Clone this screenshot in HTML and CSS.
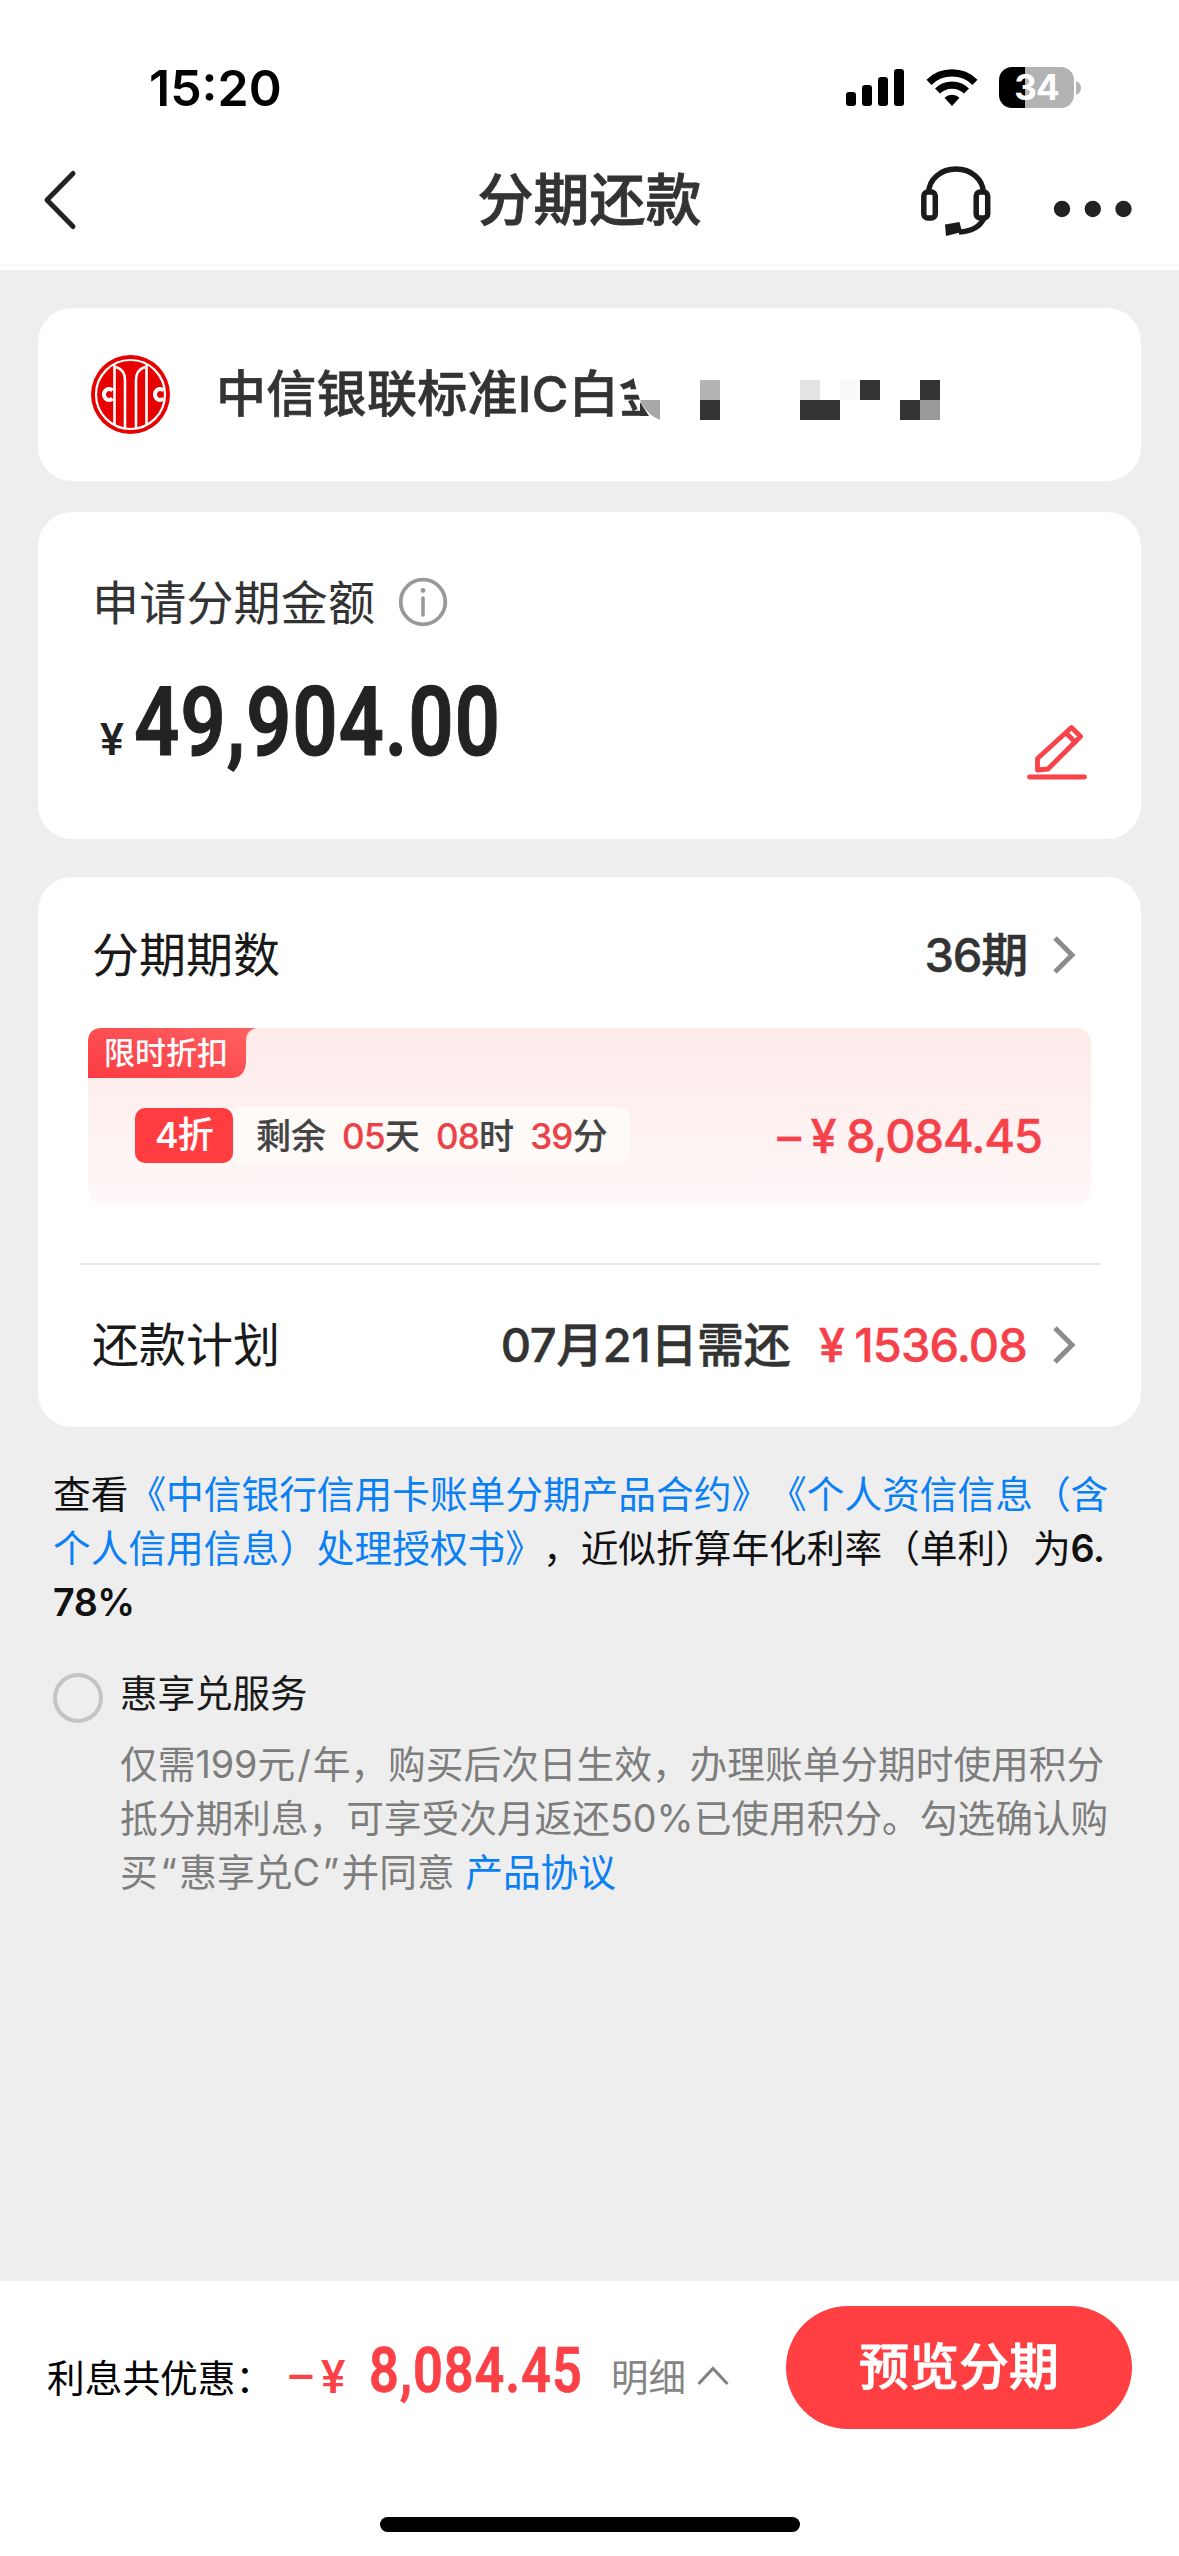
FILE: index.html
```html
<!DOCTYPE html>
<html lang="zh-CN">
<head>
<meta charset="utf-8">
<title>分期还款</title>
<link rel="stylesheet" href="styles.css">
</head>
<body>
<header class="top">
  <div class="status">
    <span class="clock">15:20</span>
    <div class="status-icons">
      <svg class="signal" width="58" height="38" viewBox="0 0 58 38"><rect x="0" y="23" width="10" height="14" rx="3"/><rect x="16" y="16" width="10" height="21" rx="3"/><rect x="32" y="8" width="10" height="29" rx="3"/><rect x="48" y="0" width="10" height="37" rx="3"/></svg>
      <svg class="wifi" width="52" height="38" viewBox="0 0 52 38"><g fill="none" stroke="#000" stroke-width="7.2"><path d="M3 13.3A33 33 0 0 1 49 13.3"/><path d="M11.5 22A21 21 0 0 1 40.500 22"/></g><path d="M18.500 28.700A11 11 0 0 1 33.500 28.700L26 37z"/></svg>
      <div class="battery"><span>34</span></div>
      <svg class="nub" width="5" height="14" viewBox="0 0 5 14"><path d="M0 0Q5 2 5 7T0 14z" fill="#b3b3b3"/></svg>
    </div>
  </div>
  <nav class="nav">
    <svg class="back" width="36" height="62" viewBox="0 0 36 62"><path d="M32 4.500L6 31L32 57.500" fill="none" stroke="#222" stroke-width="5" stroke-linecap="round" stroke-linejoin="round"/></svg>
    <h1>分期还款</h1>
    <div class="nav-actions">
      <svg width="70" height="70" viewBox="0 0 70 70" fill="none" stroke="#1a1a1a" stroke-width="5.500"><path d="M7.500 27C8 13 20 3 35 3S62 13 62.500 27"/><rect x="2.800" y="26" width="11.500" height="26" rx="4"/><rect x="55.200" y="26" width="11.500" height="26" rx="4"/><path d="M63 52C59 61 50 65.500 38 66"/><path d="M24 58.500L38.500 56L41 66L25 70z" fill="#1a1a1a" stroke="none"/></svg>
      <svg class="more" width="80" height="20" viewBox="0 0 80 20" fill="#222"><circle cx="9" cy="10" r="8.200"/><circle cx="39.800" cy="10" r="8.200"/><circle cx="70.500" cy="10" r="8.200"/></svg>
    </div>
  </nav>
</header>
<main class="content">
  <section class="card bank">
    <svg class="logo" width="79" height="79" viewBox="0 0 79 79"><circle cx="39.500" cy="39.500" r="39.500" fill="#e60000"/><g fill="none" stroke="#fff"><circle cx="39.500" cy="39.500" r="34.500" stroke-width="2.200"/><path d="M23.500 10V70M55.500 10V70" stroke-width="2.600"/><path d="M25 12Q34 15 34 25V73M54 12Q45 15 45 25V73" stroke-width="2.600"/><path d="M21.500 35.500A5 5.500 0 1 0 21.500 43.500M72.500 35.500A5 5.500 0 1 0 72.500 43.500" stroke-width="4.200"/></g></svg>
    <span class="bank-name">中信银联标准IC白金</span>
    <svg class="mask" width="340" height="70" viewBox="0 0 340 70"><path d="M34 0H340V70H62L50 58L43 48L40 40L36 28L34 20z" fill="#fff"/><path d="M20 70V58H50L60 60V70z" fill="#fff"/><path d="M40 40H60V60Q48 55 42 44z" fill="#a8a8a8"/><path d="M40 42L49 56H40z" fill="#333"/><rect x="100" y="20" width="20" height="20" fill="#b4b4b4"/><rect x="100" y="40" width="20" height="20" fill="#333"/><rect x="200" y="20" width="20" height="20" fill="#e4e4e4"/><rect x="200" y="40" width="40" height="20" fill="#333"/><rect x="240" y="20" width="20" height="20" fill="#fafafa"/><rect x="260" y="20" width="20" height="20" fill="#333"/><rect x="320" y="20" width="20" height="20" fill="#333"/><rect x="300" y="40" width="20" height="20" fill="#333"/><rect x="320" y="40" width="20" height="20" fill="#999"/></svg>
  </section>
  <section class="card amount-card">
    <div class="amount-label"><span>申请分期金额</span>
      <svg width="50" height="50" viewBox="0 0 50 50"><circle cx="25" cy="25" r="22.300" fill="none" stroke="#999" stroke-width="3.800"/><path d="M25 21V38" stroke="#999" stroke-width="3.600" stroke-linecap="round"/><circle cx="25" cy="13.500" r="2.400" fill="#999"/></svg>
    </div>
    <div class="amount-row">
      <div class="amount"><span class="yen">¥</span><span class="din">49,904.00</span></div>
      <svg class="edit" width="60" height="56" viewBox="0 0 60 56" fill="none" stroke="#f9424a" stroke-width="4.800" stroke-linecap="round" stroke-linejoin="round"><path d="M10.500 34.500L44.500 3.500L53.500 12.500L21 45L10.500 46z"/><path d="M39 9L48 18"/><path d="M2.500 53H57.500"/></svg>
    </div>
  </section>
  <section class="card plan">
    <div class="row">
      <span class="row-label">分期期数</span>
      <span class="row-value">36期</span>
      <svg class="arrow" width="24" height="40" viewBox="0 0 24 40"><path d="M3 3L20 20L3 37" fill="none" stroke="#8c8c8c" stroke-width="5"/></svg>
    </div>
    <div class="promo">
      <div class="promo-tag"><svg width="168" height="50" viewBox="0 0 168 50"><defs><linearGradient id="tag" x1="0" y1="1" x2="1" y2="0"><stop offset="0" stop-color="#fb3b42"/><stop offset="1" stop-color="#ff6162"/></linearGradient></defs><path d="M0 50V14Q0 0 14 0H168Q158 2 158 14V34Q157 50 143 50z" fill="url(#tag)"/></svg><span>限时折扣</span></div>
      <div class="promo-row">
        <span class="badge">4折</span>
        <span class="countdown"><span class="left">剩余</span><span><b>05</b>天</span><span><b>08</b>时</span><span><b>39</b>分</span></span>
        <span class="saving"><i>–</i><span class="yuan">¥</span><span>8,084.45</span></span>
      </div>
    </div>
    <div class="row repay">
      <span class="row-label">还款计划</span>
      <span class="row-value">07月21日需还</span>
      <span class="due"><span class="yuan">¥</span><span>1536.08</span></span>
      <svg class="arrow" width="24" height="40" viewBox="0 0 24 40"><path d="M3 3L20 20L3 37" fill="none" stroke="#8c8c8c" stroke-width="5"/></svg>
    </div>
  </section>
  <p class="terms">查看<a>《中信银行信用卡账单分期产品合约》《个人资信信息（含<br>个人信用信息）处理授权书》</a>，近似折算年化利率（单利）为<b>6.<br>78%</b></p>
  <section class="service">
    <span class="radio"></span>
    <div>
      <h2>惠享兑服务</h2>
      <p>仅需199元<span class="slash">/</span>年，购买后次日生效，办理账单分期时使用积分<br>抵分期利息，可享受次月返还50%已使用积分。勾选确认购<br>买<span class="quote">“</span>惠享兑C<span class="quote">”</span>并同意 <a>产品协议</a></p>
    </div>
  </section>
</main>
<footer class="bottom">
  <div class="pay-bar">
    <span class="sum-label">利息共优惠：</span>
    <span class="sum-sign">–</span><span class="sum-yen">¥</span>
    <span class="sum din">8,084.45</span>
    <span class="detail">明细</span>
    <svg class="caret" width="32" height="20" viewBox="0 0 32 20"><path d="M1.500 18L16 2.500L30.500 18" fill="none" stroke="#808080" stroke-width="3"/></svg>
    <button class="preview">预览分期</button>
  </div>
  <div class="home"></div>
</footer>
</body>
</html>
```
FILE: styles.css
```css
* { box-sizing: border-box; margin: 0; padding: 0; }
body {
  width: 1179px;
  height: 2556px;
  display: flex;
  flex-direction: column;
  background: #eee;
  color: #1a1a1a;
  font-family: Inter, "Noto Sans CJK SC", sans-serif;
  text-spacing-trim: space-all;
  white-space: nowrap;
  overflow: hidden;
}
svg { display: block; flex: none; }
a { color: #0a80f5; }

.top { height: 270px; background: #fff; flex: none; }
.status { height: 136px; padding: 0 98px 0 149px; display: flex; justify-content: space-between; }
.clock { margin-top: 58px; font-size: 50px; line-height: 60px; font-weight: 600; color: #000; }
.status-icons { display: flex; align-items: flex-start; padding-top: 67px; }
.signal { margin-top: 2px; }
.wifi { margin: 2px 21px 0 22px; }
.battery {
  width: 75px; height: 41px; border-radius: 13px;
  background: linear-gradient(90deg, #000 26px, #b3b3b3 26px);
  color: #fff; font-size: 35px; font-weight: 700; line-height: 41px; text-align: center;
  letter-spacing: -1px;
}
.nub { margin: 14px 0 0 2px; }
.nav { height: 130px; padding: 0 46px 0 41px; display: flex; align-items: center; justify-content: space-between; border-bottom: 2px solid #fafafa; }
.back { margin-right: 125px; }
.nav h1 { font-size: 56px; line-height: 64px; font-weight: 500; color: #333; margin-left: 56px; margin-bottom: 1px; -webkit-text-stroke: .8px #333; }
.nav-actions { display: flex; align-items: center; gap: 62px; }
.nav-actions > :first-child { margin-top: 2px; }
.more { margin-top: 18px; }

.content { flex: 1; padding: 38px 38px 0; display: flex; flex-direction: column; }
.card { background: #fff; border-radius: 34px; flex: none; }
.bank { position: relative; height: 173px; padding: 0 0 0 53px; display: flex; align-items: center; gap: 46px; }
.bank-name { font-size: 50px; line-height: 60px; font-weight: 500; color: #333; margin-bottom: 2px; letter-spacing: .3px; -webkit-text-stroke: .6px #333; }
.mask { position: absolute; left: 562px; top: 52px; }

.amount-card { margin-top: 31px; height: 327px; padding: 65px 54px 0 54px; }
.amount-label { display: flex; align-items: center; gap: 23px; height: 50px; font-size: 47px; line-height: 50px; color: #333; letter-spacing: .2px; }
.amount-label span { margin-top: 2px; }
.amount-row { display: flex; justify-content: space-between; align-items: flex-start; padding-top: 36px; }
.amount { display: flex; align-items: baseline; color: #222; margin-top: 3px; }
.yen { font-family: Roboto, sans-serif; font-size: 45px; font-weight: 500; width: 42px; padding-left: 8px; }
.din { font-family: Roboto, sans-serif; font-weight: 600; transform-origin: 0 50%; }
.amount .din { font-size: 96px; line-height: 112px; letter-spacing: .9px; transform: scaleX(.83); -webkit-text-stroke: 1px; }
.edit { margin-top: 61px; }

.plan { margin-top: 38px; height: 550px; }
.row { display: flex; align-items: center; padding: 0 65px 0 54px; height: 60px; font-size: 47px; line-height: 60px; }
.plan > .row:first-child { margin-top: 48px; }
.row-label { flex: 1; }
.row-value { font-weight: 500; color: #333; letter-spacing: -.4px; -webkit-text-stroke: .5px #333; }
.plan > .row:first-child .row-value { letter-spacing: -1.200px; }
.arrow { margin-left: 25px; }
.promo { margin: 43px 50px 0; height: 177px; border-radius: 15px; background: linear-gradient(#fdeae9, #fef8f8); }
.promo-tag { display: grid; width: 168px; height: 50px; }
.promo-tag > * { grid-area: 1 / 1; }
.promo-tag span { padding-left: 16px; color: #fff; font-size: 31px; line-height: 50px; font-weight: 500; }
.promo-row { display: flex; align-items: center; margin-top: 29px; padding: 0 49px 0 47px; }
.badge { width: 98px; height: 55px; border-radius: 10px; background: #ff3c40; color: #fff; font-size: 36px; line-height: 54px; font-weight: 500; text-align: center; letter-spacing: -.7px; -webkit-text-stroke: .2px #fff; }
.countdown { width: 397px; height: 57px; border-radius: 0 10px 10px 0; background: #fefaf8; color: #444; display: flex; gap: 16px; padding-left: 23px; font-size: 35px; line-height: 58px; font-weight: 500; -webkit-text-stroke: .2px; }
.countdown b { color: #ea4248; font-weight: 500; letter-spacing: -.7px; }
.saving { flex: 1; display: flex; justify-content: flex-end; font-size: 47px; line-height: 54px; font-weight: 500; color: #f5414a; letter-spacing: -1.1px; -webkit-text-stroke: .4px; }
.saving i { font-style: normal; }
.yuan { width: 46px; text-align: center; }
.repay { margin: 58px 40px 0 42px; padding: 50px 25px 0 12px; height: 112px; border-top: 2px solid #e9e9e9; }
.due { display: flex; margin-left: 18px; color: #f5414a; font-weight: 500; letter-spacing: -.9px; -webkit-text-stroke: .4px; }

.terms { margin: 40px 0 0 15px; font-size: 37.700px; line-height: 54px; color: #111; }
.terms b { font-weight: 600; letter-spacing: -.5px; }
.service { display: flex; margin: 34px 0 0 15px; gap: 17px; }
.radio { width: 50px; height: 50px; border: 4px solid #c4c4c4; border-radius: 50%; margin-top: 10px; }
.service h2 { font-size: 37.500px; line-height: 62px; font-weight: 400; }
.service p { margin-top: 12px; font-size: 37.700px; line-height: 54px; color: #7d7d7d; }
.slash { margin: 0 2px; }
.quote { margin: 0 2.500px; }

.bottom { height: 275px; background: #fff; flex: none; display: flex; flex-direction: column; align-items: center; }
.pay-bar { width: 1179px; height: 148px; padding: 25px 47px 0 47px; display: flex; align-items: flex-start; }
.sum-label { width: 239px; font-size: 37.700px; line-height: 144px; color: #000; }
.sum-sign, .sum-yen { font-family: Roboto, sans-serif; font-size: 46px; line-height: 142px; font-weight: 500; color: #fb4046; }
.sum-sign { width: 35px; }
.sum-yen { width: 48px; }
.sum { width: 242px; font-size: 63px; line-height: 129px; letter-spacing: 1.100px; color: #fb4046; transform: scaleX(.83); -webkit-text-stroke: .7px; }
.detail { font-size: 37.500px; line-height: 144px; color: #858585; }
.caret { margin: 60px 57px 0 11px; }
.preview { width: 346px; height: 123px; border: 0; border-radius: 62px; background: #ff3f42; color: #fff; font: 500 50px/121px Inter, "Noto Sans CJK SC", sans-serif; -webkit-text-stroke: .8px #fff; flex: none; }
.home { margin-top: 88px; width: 420px; height: 15px; border-radius: 8px; background: #000; }
```
